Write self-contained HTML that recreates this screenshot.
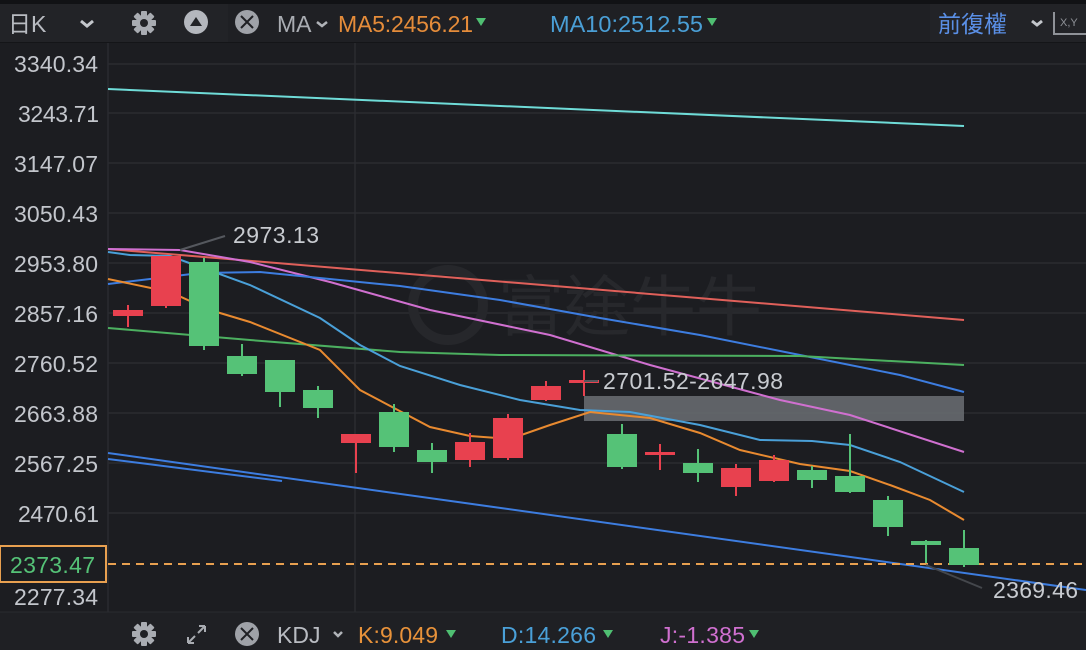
<!DOCTYPE html>
<html><head><meta charset="utf-8"><style>
html,body{margin:0;padding:0;background:#1c1d21;}
svg{display:block}
text{font-family:"Liberation Sans","Noto Sans CJK TC",sans-serif;}
</style></head><body>
<svg width="1086" height="650" viewBox="0 0 1086 650" xmlns="http://www.w3.org/2000/svg">
<rect width="1086" height="650" fill="#1c1d21"/>
<rect x="0" y="0" width="1086" height="4" fill="#111215"/>
<rect x="0" y="4" width="1086" height="38" fill="#1f2024"/>
<rect x="0" y="4" width="228" height="38" fill="#222327"/>
<rect x="930" y="4" width="156" height="38" fill="#222327"/>
<rect x="0" y="42" width="1086" height="1" fill="#141518"/>
<text x="8" y="32" font-size="23" fill="#b9bcc2">日K</text>
<path d="M81 21l6 5 6-5" stroke="#c4c7cc" stroke-width="3" fill="none"/>
<g transform="translate(144,23)" fill="#a9acb2">
<circle r="8"/>
<g><rect x="-3" y="-12" width="6" height="24" rx="1"/><rect x="-3" y="-12" width="6" height="24" rx="1" transform="rotate(45)"/><rect x="-3" y="-12" width="6" height="24" rx="1" transform="rotate(90)"/><rect x="-3" y="-12" width="6" height="24" rx="1" transform="rotate(135)"/></g>
<circle r="4" fill="#222327"/>
</g>
<circle cx="196" cy="22" r="12" fill="#b4b7bd"/>
<path d="M190 26h12l-6-9z" fill="#222327"/>
<circle cx="247" cy="22" r="12" fill="#9fa2a8"/>
<path d="M241 16l12 12M253 16l-12 12" stroke="#1f2024" stroke-width="2"/>
<text x="277" y="32" font-size="23" fill="#a9acb2">MA</text>
<path d="M317 22l5 4 5-4" stroke="#b0b3b8" stroke-width="2.5" fill="none"/>
<text x="338" y="32" font-size="23" fill="#e58c3a" textLength="135">MA5:2456.21</text>
<path d="M476 18h10l-5 8z" fill="#4fbf72"/>
<text x="550" y="32" font-size="23.5" fill="#4a9fd6" textLength="153">MA10:2512.55</text>
<path d="M707 18h10l-5 8z" fill="#4fbf72"/>
<text x="938" y="32" font-size="23" fill="#5a8fe6">前復權</text>
<path d="M1032 21l5 4 5-4" stroke="#c4c7cc" stroke-width="3" fill="none"/>
<path d="M1054 12v22h32" stroke="#8f9298" stroke-width="2" fill="none"/>
<text x="1060" y="26" font-size="11" fill="#8f9298">X,Y</text>

<g stroke="#2b2c31" stroke-width="1.5">
<line x1="108" y1="64" x2="1086" y2="64"/><line x1="108" y1="113" x2="1086" y2="113"/>
<line x1="108" y1="163" x2="1086" y2="163"/><line x1="108" y1="213" x2="1086" y2="213"/>
<line x1="108" y1="263" x2="1086" y2="263"/><line x1="108" y1="313" x2="1086" y2="313"/>
<line x1="108" y1="363" x2="1086" y2="363"/><line x1="108" y1="413" x2="1086" y2="413"/>
<line x1="108" y1="463" x2="1086" y2="463"/><line x1="108" y1="513" x2="1086" y2="513"/>
<line x1="355" y1="43" x2="355" y2="612"/>
</g>
<line x1="108" y1="43" x2="108" y2="612" stroke="#2a2b30" stroke-width="1.5"/>
<rect x="0" y="612" width="1086" height="38" fill="#1f2024"/>
<line x1="0" y1="612" x2="1086" y2="612" stroke="#2a2b30"/>

<circle cx="448" cy="305" r="35" fill="none" stroke="#26272b" stroke-width="10"/>
<text x="498" y="330" font-size="66" fill="#27282c">富途牛牛</text>

<g font-size="23" fill="#c3c6cc">
<text x="14" y="72" textLength="84">3340.34</text><text x="18" y="122" textLength="81">3243.71</text>
<text x="14" y="172" textLength="84">3147.07</text><text x="14" y="222" textLength="84">3050.43</text>
<text x="14" y="272" textLength="84">2953.80</text><text x="14" y="322" textLength="84">2857.16</text>
<text x="14" y="372" textLength="84">2760.52</text><text x="14" y="422" textLength="84">2663.88</text>
<text x="14" y="472" textLength="84">2567.25</text><text x="18" y="522" textLength="81">2470.61</text>
<text x="14" y="605" textLength="84">2277.34</text>
</g>

<rect x="584" y="396" width="380" height="25" fill="#6b6e73" opacity="0.85"/>

<g fill="none" stroke-width="2">
<polyline stroke="#6fdcd8" points="108,89 964,126"/>
<polyline stroke="#e0605a" points="108,249 964,320"/>
<polyline stroke="#d070d0" points="108,249 180,250 250,262 330,282 430,310 550,335 650,365 780,400 850,415 964,452"/>
<polyline stroke="#3d7de0" points="108,284 200,273 260,272 400,286 500,300 600,318 700,335 800,355 900,375 964,392"/>
<polyline stroke="#4cb060" points="108,328 250,340 400,352 500,355 800,356 964,365"/>
<polyline stroke="#4aa0d8" points="108,252 130,255 170,256 250,285 320,318 360,345 400,366 460,385 520,400 580,410 630,412 700,425 760,440 812,441 850,445 900,462 964,492"/>
<polyline stroke="#e88a30" points="108,279 170,292 210,310 250,322 320,350 360,390 430,427 470,436 510,439 550,425 590,412 650,418 700,433 740,450 800,464 850,471 890,485 930,500 964,520"/>
<polyline stroke="#3d7de0" points="108,453 1086,590"/>
<polyline stroke="#3d7de0" points="108,459 282,481"/>
</g>
<line x1="108" y1="564" x2="1086" y2="564" stroke="#e8a050" stroke-width="2" stroke-dasharray="8,6"/>

<g stroke-width="2">
<g fill="#e8414f" stroke="#e8414f">
<line x1="128" y1="305" x2="128" y2="327"/><rect x="113" y="310" width="30" height="6" stroke="none"/>
<line x1="166" y1="256" x2="166" y2="308"/><rect x="151" y="256" width="30" height="50" stroke="none"/>
<line x1="356" y1="434" x2="356" y2="473"/><rect x="341" y="434" width="30" height="9" stroke="none"/>
<line x1="470" y1="433" x2="470" y2="467"/><rect x="455" y="442" width="30" height="18" stroke="none"/>
<line x1="508" y1="414" x2="508" y2="460"/><rect x="493" y="418" width="30" height="40" stroke="none"/>
<line x1="546" y1="381" x2="546" y2="401"/><rect x="531" y="386" width="30" height="14" stroke="none"/>
<line x1="584" y1="370" x2="584" y2="396"/><rect x="569" y="380" width="30" height="3" stroke="none"/>
<line x1="660" y1="444" x2="660" y2="470"/><rect x="645" y="452" width="30" height="3" stroke="none"/>
<line x1="736" y1="464" x2="736" y2="496"/><rect x="721" y="468" width="30" height="19" stroke="none"/>
<line x1="774" y1="455" x2="774" y2="482"/><rect x="759" y="460" width="30" height="21" stroke="none"/>
</g>
<g fill="#55c277" stroke="#55c277">
<line x1="204" y1="258" x2="204" y2="350"/><rect x="189" y="262" width="30" height="84" stroke="none"/>
<line x1="242" y1="344" x2="242" y2="376"/><rect x="227" y="356" width="30" height="18" stroke="none"/>
<line x1="280" y1="360" x2="280" y2="407"/><rect x="265" y="360" width="30" height="32" stroke="none"/>
<line x1="318" y1="386" x2="318" y2="418"/><rect x="303" y="390" width="30" height="18" stroke="none"/>
<line x1="394" y1="404" x2="394" y2="452"/><rect x="379" y="412" width="30" height="35" stroke="none"/>
<line x1="432" y1="443" x2="432" y2="473"/><rect x="417" y="450" width="30" height="12" stroke="none"/>
<line x1="622" y1="424" x2="622" y2="469"/><rect x="607" y="434" width="30" height="33" stroke="none"/>
<line x1="698" y1="449" x2="698" y2="482"/><rect x="683" y="463" width="30" height="10" stroke="none"/>
<line x1="812" y1="466" x2="812" y2="488"/><rect x="797" y="470" width="30" height="10" stroke="none"/>
<line x1="850" y1="434" x2="850" y2="493"/><rect x="835" y="476" width="30" height="16" stroke="none"/>
<line x1="888" y1="496" x2="888" y2="536"/><rect x="873" y="500" width="30" height="27" stroke="none"/>
<line x1="926" y1="540" x2="926" y2="563"/><rect x="911" y="541" width="30" height="4" stroke="none"/>
<line x1="964" y1="530" x2="964" y2="567"/><rect x="949" y="548" width="30" height="17" stroke="none"/>
</g>
</g>

<line x1="180" y1="250" x2="225" y2="236" stroke="#55585e" stroke-width="2"/>
<text x="233" y="243" font-size="23" fill="#c8cbd0" textLength="86">2973.13</text>
<line x1="584" y1="381" x2="598" y2="381" stroke="#55585e" stroke-width="2"/>
<text x="603" y="389" font-size="23" fill="#c8cbd0" textLength="180">2701.52-2647.98</text>
<line x1="926" y1="565" x2="982" y2="588" stroke="#44474c" stroke-width="2"/>
<text x="993" y="598" font-size="23" fill="#c8cbd0" textLength="85">2369.46</text>

<rect x="0" y="546" width="106" height="36" fill="#1c1d21" stroke="#e8a050" stroke-width="2"/>
<text x="10" y="573" font-size="23" fill="#55c277" textLength="85">2373.47</text>

<g transform="translate(144,634)" fill="#a9acb2">
<circle r="8"/>
<rect x="-3" y="-12" width="6" height="24" rx="1"/><rect x="-3" y="-12" width="6" height="24" rx="1" transform="rotate(45)"/><rect x="-3" y="-12" width="6" height="24" rx="1" transform="rotate(90)"/><rect x="-3" y="-12" width="6" height="24" rx="1" transform="rotate(135)"/>
<circle r="4" fill="#1f2024"/>
</g>
<path d="M188 643l7-7M188 643v-6M188 643h6M205 626l-7 7M205 626v6M205 626h-6" stroke="#a9acb2" stroke-width="2" fill="none"/>
<circle cx="247" cy="634" r="12" fill="#9fa2a8"/>
<path d="M241 628l12 12M253 628l-12 12" stroke="#1f2024" stroke-width="2"/>
<text x="277" y="643" font-size="23" fill="#b9bcc2">KDJ</text>
<path d="M334 632l4 4 4-4" stroke="#b0b3b8" stroke-width="2.5" fill="none"/>
<text x="358" y="643" font-size="23" fill="#e8923a" textLength="80">K:9.049</text>
<path d="M446 630h10l-5 8z" fill="#4fbf72"/>
<text x="501" y="643" font-size="23" fill="#4aa0d8" textLength="95">D:14.266</text>
<path d="M603 630h10l-5 8z" fill="#4fbf72"/>
<text x="660" y="643" font-size="23" fill="#d070d0" textLength="85">J:-1.385</text>
<path d="M749 630h10l-5 8z" fill="#4fbf72"/>
</svg>
</body></html>
